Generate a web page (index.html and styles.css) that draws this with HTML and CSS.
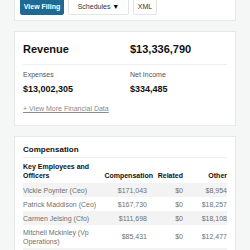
FILE: index.html
```html
<!DOCTYPE html>
<html lang="en">
<head>
  <meta charset="UTF-8">
  <meta name="viewport" content="width=device-width, initial-scale=1">
  <title>Nonprofit Filing</title>
  <link rel="stylesheet" href="styles.css">
</head>
<body>
  <!-- Filing Actions -->
  <div class="card actions">
    <button class="btn btn-primary">View Filing</button>
    <button class="btn btn-schedules">Schedules <span class="caret">&#9660;</span></button>
    <button class="btn btn-xml">XML</button>
  </div>

  <!-- Financial Summary -->
  <div class="card summary">
    <div class="summary-top">
      <h2>Revenue</h2>
      <div class="big-value">$13,336,790</div>
    </div>
    <div class="summary-grid">
      <div class="stat">
        <div class="stat-label">Expenses</div>
        <div class="stat-value">$13,002,305</div>
      </div>
      <div class="stat">
        <div class="stat-label">Net Income</div>
        <div class="stat-value">$334,485</div>
      </div>
    </div>
    <a href="#" class="more-link">+ View More Financial Data</a>
  </div>

  <!-- Compensation -->
  <div class="card compensation">
    <h3>Compensation</h3>
    <table class="comp-table">
      <colgroup>
        <col class="col-name">
        <col class="col-comp">
        <col class="col-related">
        <col>
      </colgroup>
      <thead>
        <tr>
          <th class="name">Key Employees and Officers</th>
          <th class="num">Compensation</th>
          <th class="num">Related</th>
          <th class="num">Other</th>
        </tr>
      </thead>
      <tbody>
        <tr>
          <td>Vickie Poynter (Ceo)</td>
          <td class="num comp">$171,043</td>
          <td class="num">$0</td>
          <td class="num">$8,954</td>
        </tr>
        <tr>
          <td>Patrick Maddison (Ceo)</td>
          <td class="num comp">$167,730</td>
          <td class="num">$0</td>
          <td class="num">$18,257</td>
        </tr>
        <tr>
          <td>Carmen Jelsing (Cfo)</td>
          <td class="num comp">$111,698</td>
          <td class="num">$0</td>
          <td class="num">$18,108</td>
        </tr>
        <tr>
          <td>Mitchell Mckinley (Vp Operations)</td>
          <td class="num comp">$85,431</td>
          <td class="num">$0</td>
          <td class="num">$12,477</td>
        </tr>
        <tr>
          <td>Kathy Schmeck (Vp Human Resources)</td>
          <td class="num comp">$83,229</td>
          <td class="num">$0</td>
          <td class="num">$15,075</td>
        </tr>
      </tbody>
    </table>
  </div>
</body>
</html>
```

FILE: styles.css
```css
* {
  box-sizing: border-box;
  margin: 0;
  padding: 0;
}

body {
  font-family: 'Liberation Sans', Arial, sans-serif;
  background: #f5f6f6;
  color: #111;
  padding: 0 14px;
}

.card {
  background: #fff;
  border: 1px solid #e7e8e8;
  margin-bottom: 10px;
}

/* Filing Actions */
.actions {
  margin-top: -4px;
  display: flex;
  gap: 4px;
  padding: 1px 5px 5px;
}

.btn {
  font-family: inherit;
  font-size: 7px;
  height: 17px;
  border-radius: 2px;
  border: 1px solid #e3e4e4;
  background: #fff;
  color: #333;
  cursor: pointer;
}

.btn-primary {
  width: 44px;
  background: #1f6a93;
  border-color: #1f6a93;
  color: #fff;
  font-weight: 700;
}

.btn-schedules {
  width: 61px;
}

.caret {
  font-size: 7px;
  color: #000;
}

.btn-xml {
  width: 24px;
}

/* Financial Summary */
.summary {
  padding: 10px 8px 10px;
}

.summary-top {
  display: grid;
  grid-template-columns: 107px 1fr;
  padding-bottom: 8px;
  border-bottom: 1px solid #eeeeee;
}

.summary-top h2,
.big-value {
  font-size: 11px;
  line-height: 14px;
  font-weight: 700;
}

.summary-grid {
  display: grid;
  grid-template-columns: 107px 1fr;
  margin-top: 5px;
}

.stat-label {
  font-size: 7px;
  line-height: 9px;
  color: #555;
}

.stat-value {
  margin-top: 3.5px;
  font-size: 9px;
  line-height: 12px;
  font-weight: 700;
}

.more-link {
  display: inline-block;
  margin-top: 9px;
  font-size: 7px;
  line-height: 9px;
  color: #8a8a8a;
}

/* Compensation */
.compensation {
  padding: 8px 8px 10px;
}

.compensation h3 {
  font-size: 8px;
  line-height: 10px;
  font-weight: 700;
  padding-bottom: 2px;
  border-bottom: 1px solid #eeeeee;
}

.comp-table {
  width: 100%;
  margin-top: 4px;
  border-collapse: collapse;
  table-layout: fixed;
}

.col-name { width: 80px; }
.col-comp { width: 50px; }
.col-related { width: 30px; }

.comp-table th {
  font-size: 7px;
  line-height: 9px;
  font-weight: 700;
  color: #111;
  vertical-align: bottom;
  padding: 0 0 3.5px;
  text-align: left;
}

.comp-table td {
  font-size: 7px;
  line-height: 9px;
  color: #707070;
  padding: 2.5px 0;
  vertical-align: middle;
}

.comp-table .num {
  text-align: right;
}

.comp-table td.comp {
  padding-right: 6px;
}

.comp-table tbody tr:nth-child(odd) {
  background: #f3f3f3;
}
```
